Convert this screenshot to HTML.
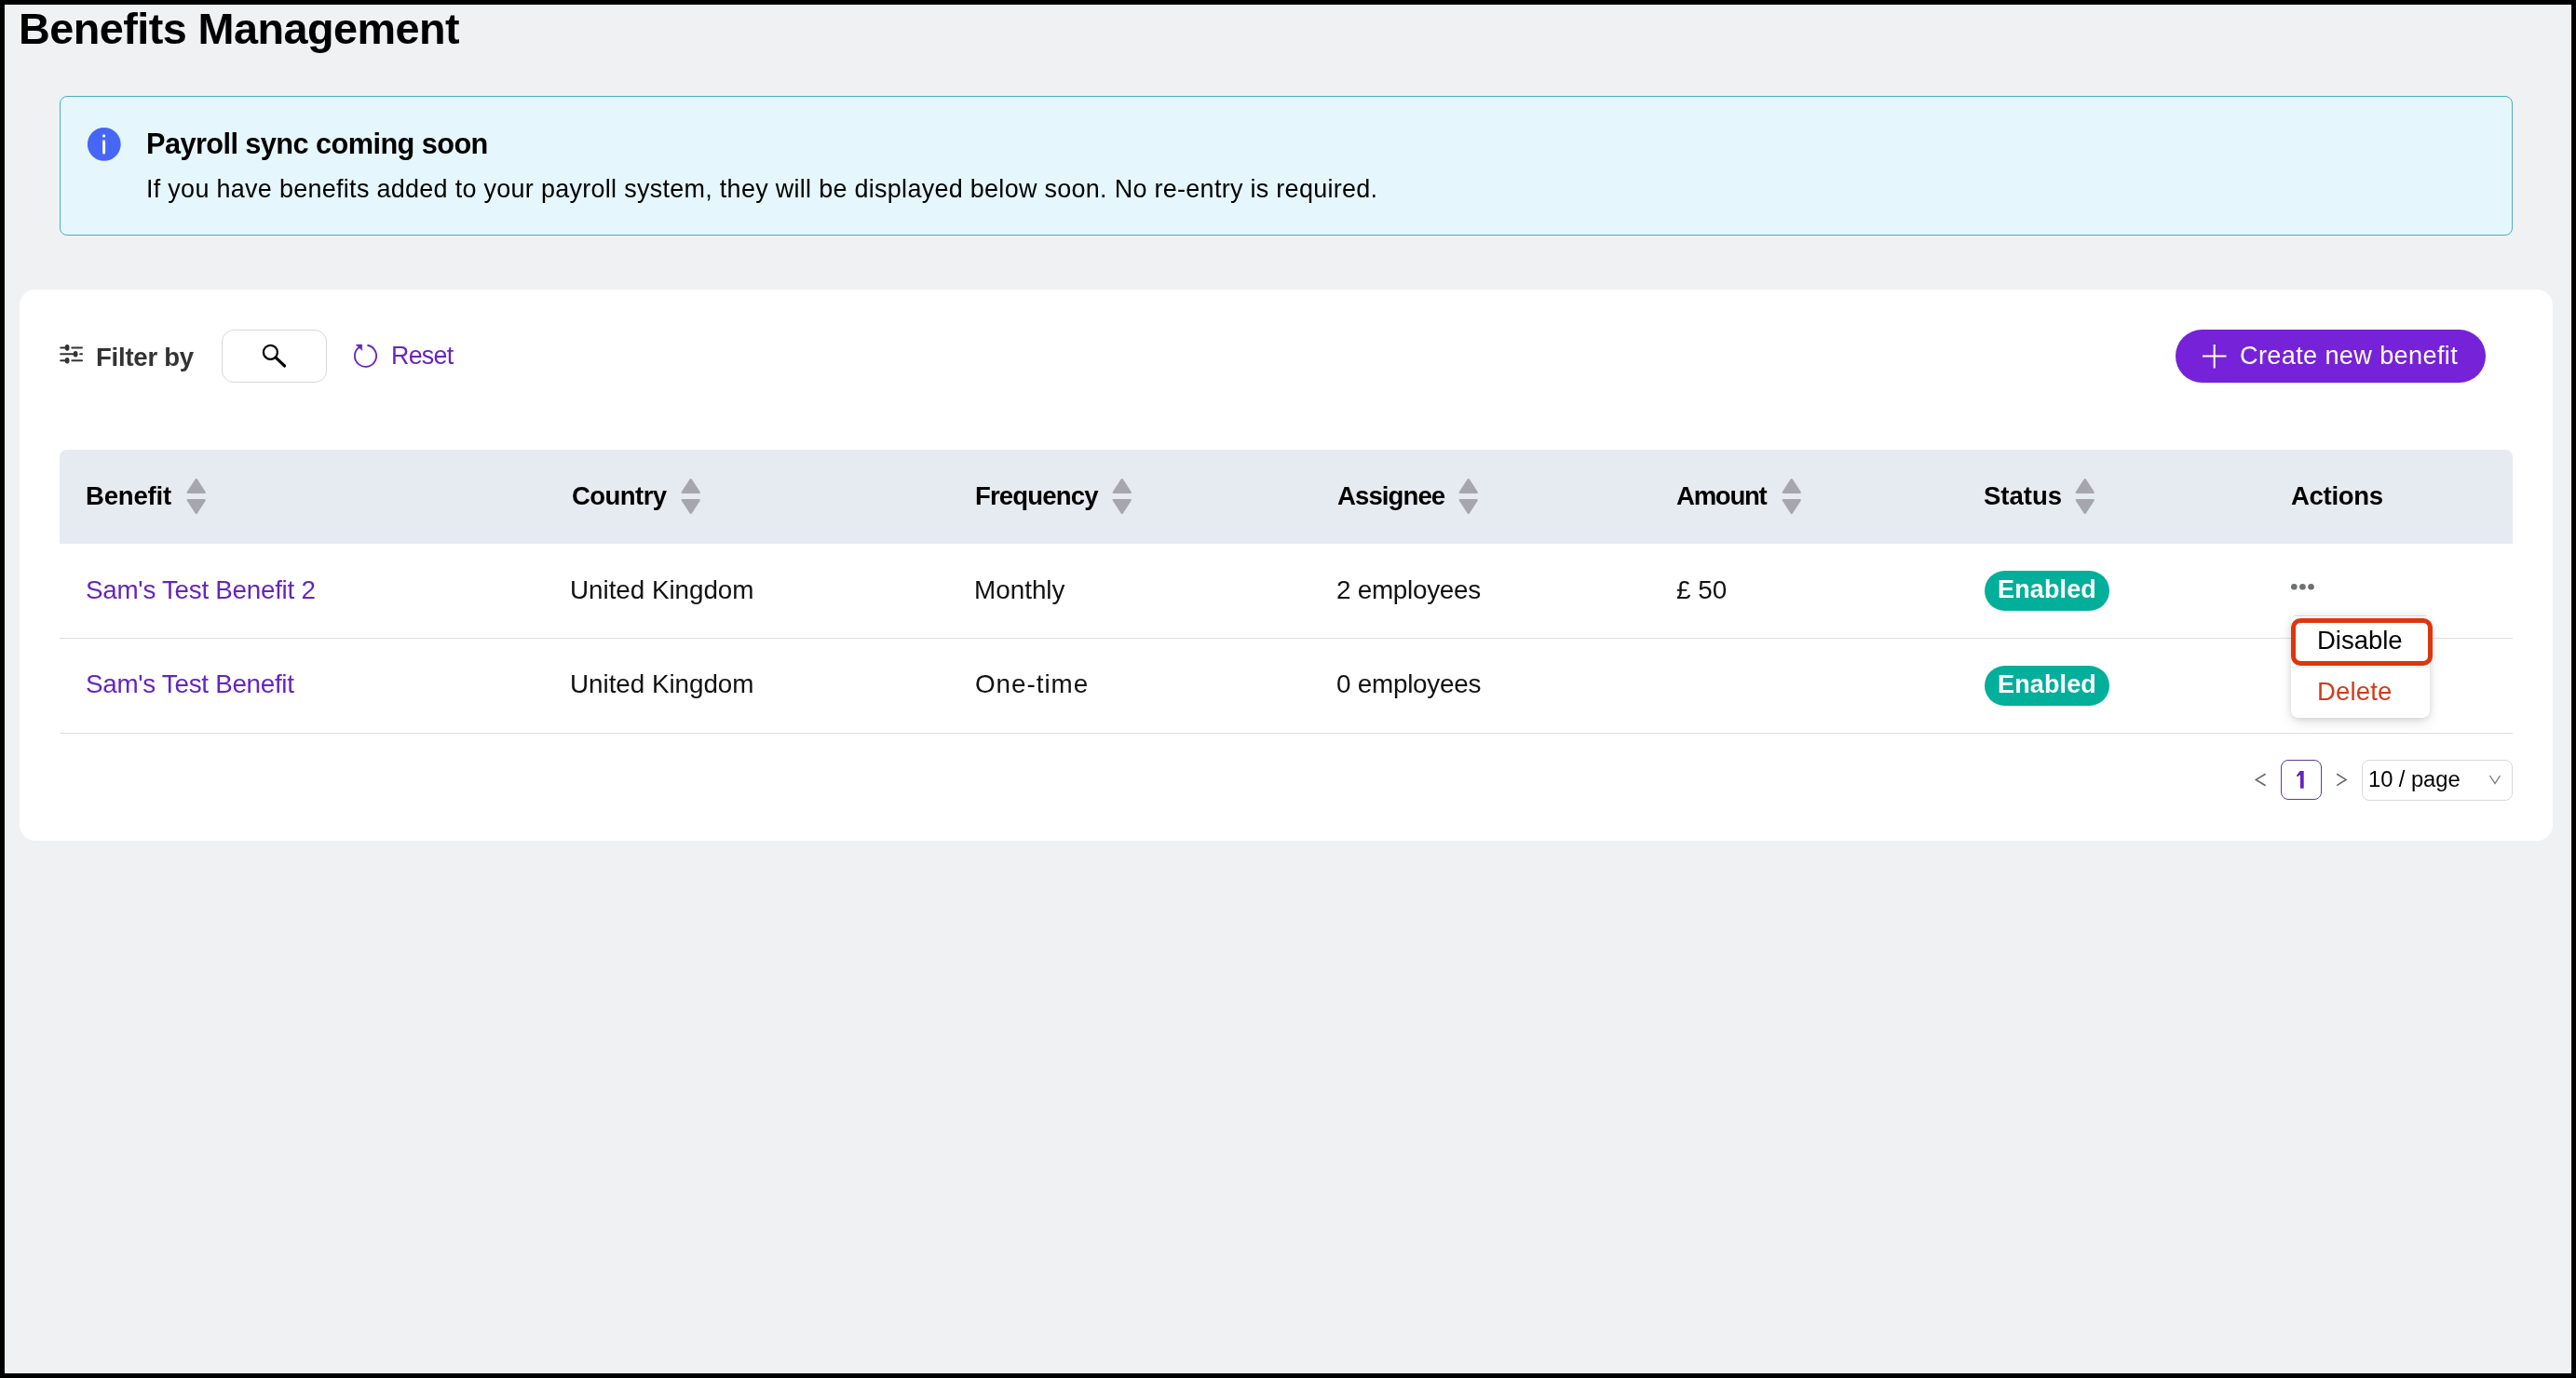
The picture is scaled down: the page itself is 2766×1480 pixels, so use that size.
<!DOCTYPE html>
<html><head><meta charset="utf-8"><title>Benefits Management</title>
<style>
html,body{margin:0;padding:0;}
body{width:2766px;height:1480px;background:#000;position:relative;overflow:hidden;font-family:"Liberation Sans",sans-serif;}
.frame{position:absolute;left:5px;top:5px;width:2756px;height:1470px;background:#fff;}
.bg{position:absolute;left:6px;top:6px;width:2754px;height:1468px;background:#f0f1f3;}
.a{position:absolute;}
.t{position:absolute;white-space:pre;will-change:transform;font-family:"Liberation Sans",sans-serif;}
</style></head><body>
<div class="frame"></div><div class="bg"></div>

<div class="t" style="left:20.0px;top:7.6px;font-size:46.81px;line-height:46.81px;letter-spacing:-0.562px;font-weight:700;color:#000;">Benefits Management</div>
<div class="a" style="left:64px;top:103px;width:2632px;height:148px;border:1px solid #50abc6;border-radius:8px;background:#e5f7fc"></div>
<svg class="a" style="left:94px;top:137px" width="36" height="36" viewBox="0 0 36 36"><circle cx="17.8" cy="17.9" r="17.9" fill="#4766f8"/><circle cx="17.6" cy="8.9" r="1.65" fill="#fff"/><rect x="16.1" y="13.3" width="3.0" height="15.3" rx="1.5" fill="#fff"/></svg>
<div class="t" style="left:157.4px;top:139.5px;font-size:30.72px;line-height:30.72px;letter-spacing:-0.578px;font-weight:700;color:#000;">Payroll sync coming soon</div>
<div class="t" style="left:157.2px;top:190.1px;font-size:26.96px;line-height:26.96px;letter-spacing:0.295px;font-weight:400;color:#000;">If you have benefits added to your payroll system, they will be displayed below soon. No re-entry is required.</div>
<div class="a" style="left:21px;top:311px;width:2720px;height:592px;border-radius:17px;background:#fff"></div>
<svg class="a" style="left:60px;top:362px" width="35" height="35" viewBox="0 0 35 35"><g stroke="#333" stroke-width="2" stroke-linecap="round"><line x1="5.2" y1="11.4" x2="12" y2="11.4"/><line x1="17.3" y1="11.4" x2="28" y2="11.4"/><line x1="5.2" y1="18.3" x2="21" y2="18.3"/><line x1="26.1" y1="18.3" x2="28" y2="18.3"/><line x1="5.2" y1="25.3" x2="12" y2="25.3"/><line x1="17.3" y1="25.3" x2="28" y2="25.3"/></g><g fill="#333"><ellipse cx="12.1" cy="11.4" rx="2.4" ry="3.3"/><ellipse cx="21.1" cy="18.3" rx="2.4" ry="3.3"/><ellipse cx="12.1" cy="25.3" rx="2.4" ry="3.3"/></g></svg>
<div class="t" style="left:103.1px;top:370.2px;font-size:27.54px;line-height:27.54px;letter-spacing:-0.239px;font-weight:700;color:#333;">Filter by</div>
<div class="a" style="left:238px;top:354px;width:111px;height:55px;border:1px solid #d9d9d9;border-radius:13px;background:#fff"></div>
<svg class="a" style="left:275px;top:362px" width="40" height="40" viewBox="0 0 40 40"><circle cx="15.4" cy="16.3" r="7.5" fill="none" stroke="#000" stroke-width="2.2"/><line x1="21.2" y1="22.2" x2="30.6" y2="31" stroke="#000" stroke-width="3.1" stroke-linecap="round"/></svg>
<svg class="a" style="left:376px;top:366px" width="34" height="34" viewBox="0 0 34 34"><path d="M18.39 4.76 A11.6 11.6 0 1 1 9.85 6.70" fill="none" stroke="#6624bf" stroke-width="1.8"/><path d="M6.2 4.3 L12.7 4.1 L12.7 10.2 Z" fill="#6624bf" stroke="#6624bf" stroke-width="0.6" stroke-linejoin="round"/></svg>
<div class="t" style="left:419.7px;top:369.2px;font-size:26.81px;line-height:26.81px;letter-spacing:-0.708px;font-weight:400;color:#6624bf;">Reset</div>
<div class="a" style="left:2336px;top:354px;width:333px;height:57px;border-radius:28.5px;background:#7622d8"></div>
<svg class="a" style="left:2364px;top:369px" width="28" height="28" viewBox="0 0 28 28"><g stroke="#fff" stroke-width="2"><line x1="1" y1="13.5" x2="26.5" y2="13.5"/><line x1="13.7" y1="1" x2="13.7" y2="26.5"/></g></svg>
<div class="t" style="left:2404.9px;top:367.9px;font-size:27.1px;line-height:27.1px;letter-spacing:0.369px;font-weight:400;color:#fff;">Create new benefit</div>
<div class="a" style="left:64px;top:483px;width:2634px;height:101px;border-radius:8px 8px 0 0;background:#e6eaf1"></div>
<div class="t" style="left:92.1px;top:518.6px;font-size:27.54px;line-height:27.54px;letter-spacing:-0.191px;font-weight:700;color:#000;">Benefit</div>
<div class="t" style="left:613.5px;top:518.6px;font-size:27.54px;line-height:27.54px;letter-spacing:-0.56px;font-weight:700;color:#000;">Country</div>
<div class="t" style="left:1046.7px;top:518.6px;font-size:27.54px;line-height:27.54px;letter-spacing:-0.841px;font-weight:700;color:#000;">Frequency</div>
<div class="t" style="left:1435.6px;top:518.6px;font-size:27.54px;line-height:27.54px;letter-spacing:-0.901px;font-weight:700;color:#000;">Assignee</div>
<div class="t" style="left:1800.2px;top:518.6px;font-size:27.54px;line-height:27.54px;letter-spacing:-1.257px;font-weight:700;color:#000;">Amount</div>
<div class="t" style="left:2130.2px;top:518.6px;font-size:27.54px;line-height:27.54px;letter-spacing:-0.012px;font-weight:700;color:#000;">Status</div>
<div class="t" style="left:2459.9px;top:518.6px;font-size:27.54px;line-height:27.54px;letter-spacing:-0.326px;font-weight:700;color:#000;">Actions</div>
<svg class="a" style="left:196.5px;top:510px" width="28" height="46" viewBox="0 0 28 46"><path d="M13.75 5.20 L22.70 18.80 L4.80 18.80 Z" fill="#a6a7ad" stroke="#a6a7ad" stroke-width="2.4" stroke-linejoin="round"/><path d="M13.75 40.80 L22.70 27.20 L4.80 27.20 Z" fill="#a6a7ad" stroke="#a6a7ad" stroke-width="2.4" stroke-linejoin="round"/></svg>
<svg class="a" style="left:728px;top:510px" width="28" height="46" viewBox="0 0 28 46"><path d="M13.75 5.20 L22.70 18.80 L4.80 18.80 Z" fill="#a6a7ad" stroke="#a6a7ad" stroke-width="2.4" stroke-linejoin="round"/><path d="M13.75 40.80 L22.70 27.20 L4.80 27.20 Z" fill="#a6a7ad" stroke="#a6a7ad" stroke-width="2.4" stroke-linejoin="round"/></svg>
<svg class="a" style="left:1191px;top:510px" width="28" height="46" viewBox="0 0 28 46"><path d="M13.75 5.20 L22.70 18.80 L4.80 18.80 Z" fill="#a6a7ad" stroke="#a6a7ad" stroke-width="2.4" stroke-linejoin="round"/><path d="M13.75 40.80 L22.70 27.20 L4.80 27.20 Z" fill="#a6a7ad" stroke="#a6a7ad" stroke-width="2.4" stroke-linejoin="round"/></svg>
<svg class="a" style="left:1562.8px;top:510px" width="28" height="46" viewBox="0 0 28 46"><path d="M13.75 5.20 L22.70 18.80 L4.80 18.80 Z" fill="#a6a7ad" stroke="#a6a7ad" stroke-width="2.4" stroke-linejoin="round"/><path d="M13.75 40.80 L22.70 27.20 L4.80 27.20 Z" fill="#a6a7ad" stroke="#a6a7ad" stroke-width="2.4" stroke-linejoin="round"/></svg>
<svg class="a" style="left:1910.3px;top:510px" width="28" height="46" viewBox="0 0 28 46"><path d="M13.75 5.20 L22.70 18.80 L4.80 18.80 Z" fill="#a6a7ad" stroke="#a6a7ad" stroke-width="2.4" stroke-linejoin="round"/><path d="M13.75 40.80 L22.70 27.20 L4.80 27.20 Z" fill="#a6a7ad" stroke="#a6a7ad" stroke-width="2.4" stroke-linejoin="round"/></svg>
<svg class="a" style="left:2225px;top:510px" width="28" height="46" viewBox="0 0 28 46"><path d="M13.75 5.20 L22.70 18.80 L4.80 18.80 Z" fill="#a6a7ad" stroke="#a6a7ad" stroke-width="2.4" stroke-linejoin="round"/><path d="M13.75 40.80 L22.70 27.20 L4.80 27.20 Z" fill="#a6a7ad" stroke="#a6a7ad" stroke-width="2.4" stroke-linejoin="round"/></svg>
<div class="a" style="left:64px;top:685px;width:2634px;height:1px;background:#dedede"></div>
<div class="a" style="left:64px;top:787px;width:2634px;height:1px;background:#dedede"></div>
<div class="t" style="left:92.4px;top:620.4px;font-size:27.83px;line-height:27.83px;letter-spacing:-0.284px;font-weight:400;color:#6624bf;">Sam's Test Benefit 2</div>
<div class="t" style="left:612.4px;top:619.5px;font-size:27.83px;line-height:27.83px;letter-spacing:-0.042px;font-weight:400;color:#111;">United Kingdom</div>
<div class="t" style="left:1046.4px;top:619.5px;font-size:27.83px;line-height:27.83px;letter-spacing:0.006px;font-weight:400;color:#111;">Monthly</div>
<div class="t" style="left:1435.0px;top:619.5px;font-size:27.83px;line-height:27.83px;letter-spacing:-0.267px;font-weight:400;color:#111;">2 employees</div>
<div class="t" style="left:1800.2px;top:619.5px;font-size:27.83px;line-height:27.83px;letter-spacing:0.062px;font-weight:400;color:#111;">£ 50</div>
<div class="a" style="left:2131px;top:613px;width:134px;height:43px;border-radius:21.5px;background:#02af9a"></div>
<div class="t" style="left:2144.7px;top:619.9px;font-size:26.96px;line-height:26.96px;letter-spacing:0.152px;font-weight:700;color:#fff;">Enabled</div>
<svg class="a" style="left:2458px;top:625px" width="30" height="11" viewBox="0 0 30 11"><g fill="#6e7077"><circle cx="5.3" cy="5.2" r="3.3"/><circle cx="14.4" cy="5.2" r="3.3"/><circle cx="23.5" cy="5.2" r="3.3"/></g></svg>
<div class="t" style="left:92.4px;top:720.5px;font-size:27.83px;line-height:27.83px;letter-spacing:-0.301px;font-weight:400;color:#6624bf;">Sam's Test Benefit</div>
<div class="t" style="left:612.4px;top:720.5px;font-size:27.83px;line-height:27.83px;letter-spacing:-0.042px;color:#111">United Kingdom</div>
<div class="t" style="left:1047.2px;top:720.5px;font-size:27.83px;line-height:27.83px;letter-spacing:0.963px;font-weight:400;color:#111;">One-time</div>
<div class="t" style="left:1435.3px;top:720.5px;font-size:27.83px;line-height:27.83px;letter-spacing:-0.235px;font-weight:400;color:#111;">0 employees</div>
<div class="a" style="left:2131px;top:715px;width:134px;height:43px;border-radius:21.5px;background:#02af9a"></div>
<div class="t" style="left:2144.7px;top:721.9px;font-size:26.96px;line-height:26.96px;letter-spacing:0.152px;font-weight:700;color:#fff">Enabled</div>
<div class="a" style="left:2460px;top:661px;width:149px;height:110px;border-radius:8px;background:#fff;box-shadow:0 0 10px rgba(0,0,0,0.07),0 6px 14px rgba(0,0,0,0.09),0 2px 5px rgba(0,0,0,0.05)"></div>
<div class="a" style="left:2460px;top:716px;width:149px;height:1px;background:#e8e8e8"></div>
<div class="a" style="left:2464px;top:661px;width:141px;height:1px;background:#d6d9dd"></div>
<div class="a" style="left:2460px;top:664px;width:142px;height:41px;border:5px solid #dd360c;border-radius:10px"></div>
<div class="t" style="left:2488.1px;top:673.5px;font-size:27.54px;line-height:27.54px;letter-spacing:-0.032px;font-weight:400;color:#000;">Disable</div>
<div class="t" style="left:2488.1px;top:729.0px;font-size:27.54px;line-height:27.54px;letter-spacing:0.165px;font-weight:400;color:#d03c1c;">Delete</div>
<svg class="a" style="left:2418px;top:828px" width="20" height="20" viewBox="0 0 20 20"><path d="M14.6 3.2 L4.4 9.4 L14.6 15.7" fill="none" stroke="#666" stroke-width="1.6"/></svg>
<div class="a" style="left:2449px;top:816px;width:41.5px;height:41px;border:1.4px solid #603a9e;border-radius:8px;background:#fff"></div>
<svg class="a" style="left:2460px;top:824px" width="20" height="26" viewBox="0 0 20 26"><path d="M9.6 4 L13.7 4 L13.7 22.8 L9.9 22.8 L9.9 8.3 L7.6 9.7 Q6.1 10.5 6.1 9.0 Q6.1 8.0 7.0 7.4 Z" fill="#6624bf"/></svg>
<svg class="a" style="left:2504px;top:828px" width="20" height="20" viewBox="0 0 20 20"><path d="M5.2 3.2 L15 9.4 L5.2 15.7" fill="none" stroke="#666" stroke-width="1.6"/></svg>
<div class="a" style="left:2536px;top:816px;width:160px;height:42px;border:1px solid #d9d9d9;border-radius:8px;background:#fff"></div>
<div class="t" style="left:2543.1px;top:824.6px;font-size:23.77px;line-height:23.77px;letter-spacing:-0.058px;font-weight:400;color:#000;">10 / page</div>
<svg class="a" style="left:2671px;top:830px" width="16" height="14" viewBox="0 0 16 14"><path d="M2.5 3 L8 11.5 L13.5 3" fill="none" stroke="#777" stroke-width="1.3"/></svg>
</body></html>
